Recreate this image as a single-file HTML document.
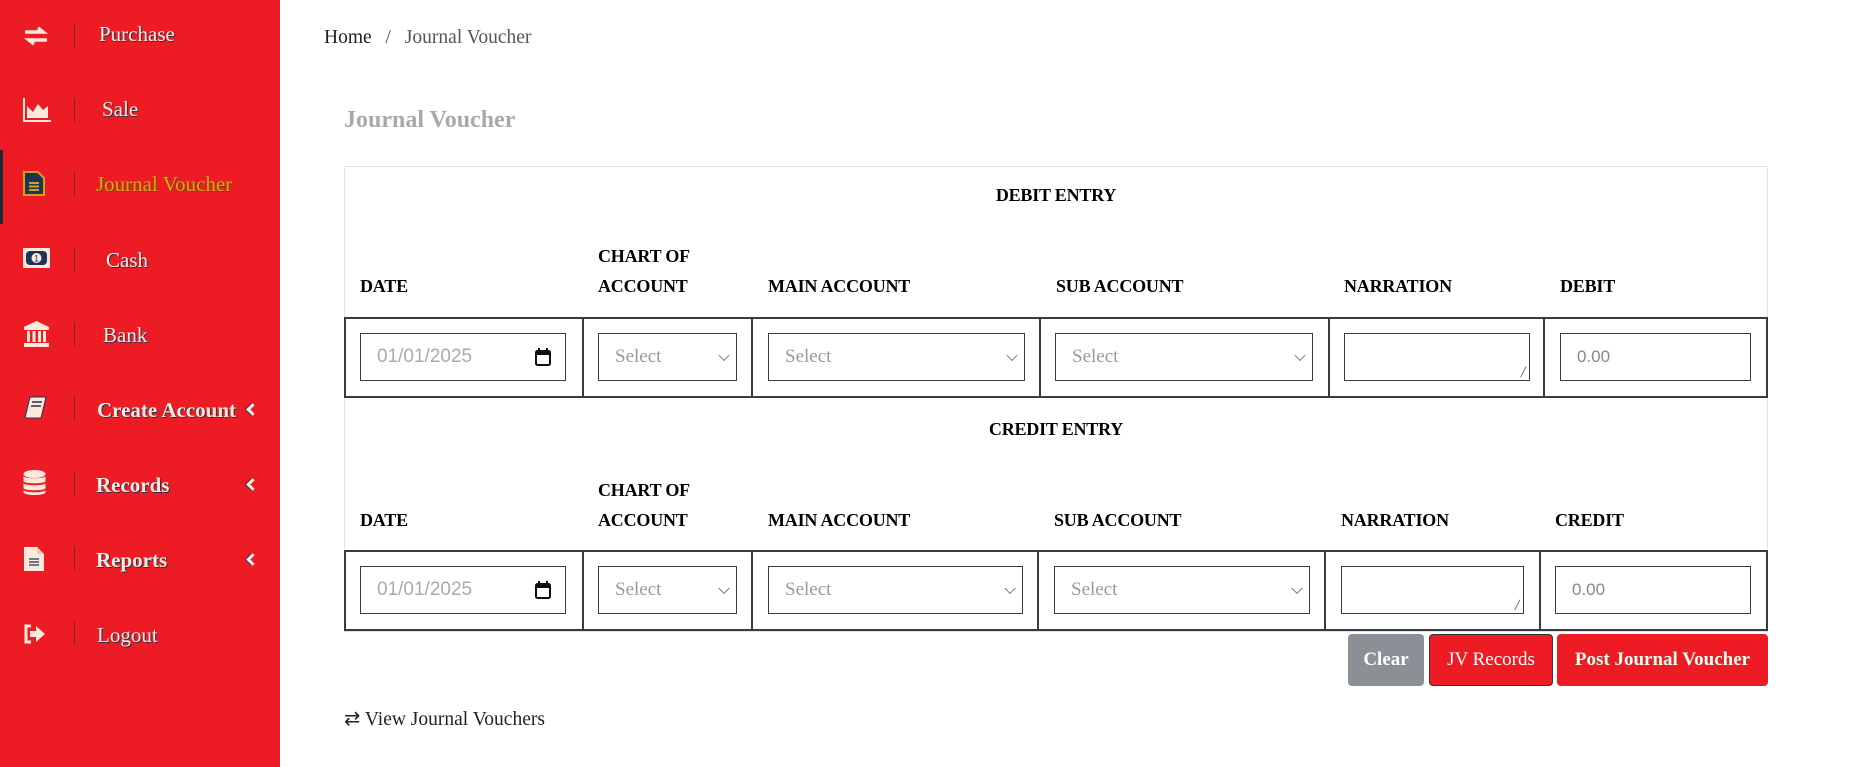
<!DOCTYPE html>
<html><head><meta charset="utf-8">
<style>
*{margin:0;padding:0;box-sizing:border-box}
body{width:1876px;height:767px;position:relative;overflow:hidden;background:#fff;font-family:"Liberation Serif",serif;color:#222}
.a{position:absolute;white-space:nowrap}
#sb{position:absolute;left:0;top:0;width:280px;height:767px;background:#ed1c24}
.mi{color:#fbeadc;font-size:21px;line-height:24px;text-shadow:1px 1px 0 #1d3557}
.mb{font-weight:bold}
.dv{position:absolute;left:74px;width:1px;height:24px;background:#6b2a30}
.ic{position:absolute;left:23px}
.chev{position:absolute;left:248px;width:9px;height:9px;border-left:3px solid #fbeadc;border-bottom:3px solid #fbeadc;transform:rotate(45deg);box-shadow:-1px 1px 0 #1d3557}
.h{font-weight:bold;font-size:18px;color:#000;line-height:30px;letter-spacing:-0.2px}
.box{position:absolute;border:2px solid #3a3b40;background:#fff}
.inp{position:absolute;border:1.5px solid #3a3b40;background:#fff;color:#999;font-size:19px;display:flex;align-items:center;padding-left:16px}
.sans{font-family:"Liberation Sans",sans-serif}
.car{position:absolute;right:8px;top:50%;width:8px;height:8px;border-right:1.5px solid #777;border-bottom:1.5px solid #777;transform:translateY(-70%) rotate(45deg)}
.btn{position:absolute;border-radius:4px;color:#fff;font-weight:bold;font-size:19px;display:flex;align-items:center;justify-content:center}
</style></head><body>
<div id="sb">
 <div class="a" style="left:0;top:150px;width:3px;height:74px;background:#1f2a33"></div>
 <svg class="ic" style="top:26px" width="26" height="20" viewBox="0 0 26 20"><path d="M2 6h18l-5-4M24 14H6l5 4" stroke="#fbeadc" stroke-width="3.5" fill="none"/></svg>
 <div class="dv" style="top:23px"></div><div class="a mi" style="left:99px;top:22px">Purchase</div>
 <svg class="ic" style="top:98px" width="28" height="24" viewBox="0 0 28 24"><path d="M1 0v23h27" stroke="#fbeadc" stroke-width="2" fill="none"/><path d="M4 20V8l6 6 5-8 5 6 5-4v12z" fill="#fbeadc"/></svg>
 <div class="dv" style="top:98px"></div><div class="a mi" style="left:102px;top:97px">Sale</div>
 <svg class="ic" style="top:171px" width="22" height="25" viewBox="0 0 22 25"><path d="M1 1h14l6 6v17H1z" fill="#1d3557" stroke="#d4a017" stroke-width="2"/><path d="M6 12h10M6 15.5h10M6 19h10" stroke="#d4a017" stroke-width="2"/></svg>
 <div class="dv" style="top:172px"></div><div class="a mi" style="left:96px;top:172px;color:#d9a515;text-shadow:1px 1px 0 #6b4a10">Journal Voucher</div>
 <svg class="ic" style="top:248px" width="27" height="20" viewBox="0 0 27 20"><rect x="0" y="0" width="27" height="20" fill="#fbeadc"/><rect x="3" y="3" width="21" height="14" rx="4" fill="#1d3557"/><circle cx="13.5" cy="10" r="5" fill="#fbeadc"/><text x="13.5" y="13.5" font-size="9" text-anchor="middle" fill="#1d3557" font-family="Liberation Sans">1</text></svg>
 <div class="dv" style="top:247px"></div><div class="a mi" style="left:106px;top:248px">Cash</div>
 <svg class="ic" style="top:320px" width="27" height="27" viewBox="0 0 27 27"><path d="M13.5 1L1 7v3h25V7z" fill="#fbeadc"/><path d="M4 11h3v11H4zM9.5 11h3v11h-3zM15 11h3v11h-3zM20 11h3v11h-3z" fill="#fbeadc"/><rect x="1" y="23" width="25" height="4" fill="#fbeadc"/></svg>
 <div class="dv" style="top:322px"></div><div class="a mi" style="left:103px;top:323px">Bank</div>
 <svg class="ic" style="top:396px" width="24" height="24" viewBox="0 0 24 24"><path d="M7 1h16l-5 21H2z" fill="#fbeadc" stroke="#1d3557" stroke-width="1"/><path d="M9 6h10M8 10h10" stroke="#1d3557" stroke-width="1.5"/></svg>
 <div class="dv" style="top:396px"></div><div class="a mi mb" style="left:97px;top:398px">Create Account</div>
 <div class="chev" style="top:405px"></div>
 <svg class="ic" style="top:470px" width="23" height="26" viewBox="0 0 23 26"><ellipse cx="11.5" cy="4" rx="11" ry="4" fill="#fbeadc"/><path d="M0.5 6v5c0 3 22 3 22 0V6c0 3-22 3-22 0zM0.5 13v5c0 3 22 3 22 0v-5c0 3-22 3-22 0zM0.5 20v2c0 4 22 4 22 0v-2c0 3-22 3-22 0z" fill="#fbeadc"/></svg>
 <div class="dv" style="top:471px"></div><div class="a mi mb" style="left:96px;top:473px">Records</div>
 <div class="chev" style="top:480px"></div>
 <svg class="ic" style="top:546px" width="22" height="26" viewBox="0 0 22 26"><path d="M1 1h13l7 7v17H1z" fill="#fbeadc"/><path d="M14 1v7h7" fill="#e8c9b8"/><path d="M6 13h10M6 16h10M6 19h10" stroke="#1d3557" stroke-width="1.3"/></svg>
 <div class="dv" style="top:546px"></div><div class="a mi mb" style="left:96px;top:548px">Reports</div>
 <div class="chev" style="top:555px"></div>
 <svg class="ic" style="top:624px" width="23" height="20" viewBox="0 0 23 20"><path d="M8 2H3v16h5" stroke="#fbeadc" stroke-width="3" fill="none"/><path d="M7 7h6V2l9 8-9 8v-5H7z" fill="#fbeadc"/></svg>
 <div class="dv" style="top:621px"></div><div class="a mi" style="left:97px;top:623px">Logout</div>
</div>

<div class="a" style="left:324px;top:27px;font-size:19.5px;color:#222">Home <span style="color:#555;margin:0 9px">/</span> <span style="color:#555">Journal Voucher</span></div>
<div class="a" style="left:344px;top:107px;font-size:24px;font-weight:bold;color:#a9a9a9">Journal Voucher</div>

<div class="a" style="left:344px;top:166px;width:1424px;height:466px;border:1px solid #e0e0e6"></div>

<div class="a h" style="left:344px;width:1424px;text-align:center;top:180px">DEBIT ENTRY</div>
<div class="a h" style="left:598px;top:241px">CHART OF</div>
<div class="a h" style="left:360px;top:271px">DATE</div>
<div class="a h" style="left:598px;top:271px">ACCOUNT</div>
<div class="a h" style="left:768px;top:271px">MAIN ACCOUNT</div>
<div class="a h" style="left:1056px;top:271px">SUB ACCOUNT</div>
<div class="a h" style="left:1344px;top:271px">NARRATION</div>
<div class="a h" style="left:1560px;top:271px">DEBIT</div>

<div class="box" style="left:344px;top:317px;width:1424px;height:81px"></div>
<div class="a" style="left:582px;top:317px;width:2px;height:81px;background:#3a3b40"></div>
<div class="a" style="left:751px;top:317px;width:2px;height:81px;background:#3a3b40"></div>
<div class="a" style="left:1039px;top:317px;width:2px;height:81px;background:#3a3b40"></div>
<div class="a" style="left:1328px;top:317px;width:2px;height:81px;background:#3a3b40"></div>
<div class="a" style="left:1543px;top:317px;width:2px;height:81px;background:#3a3b40"></div>

<div class="inp sans" style="left:360px;top:333px;width:206px;height:48px;font-size:19px;color:#aaa">01/01/2025
 <svg style="position:absolute;right:14px;top:14px" width="16" height="18" viewBox="0 0 16 18"><rect x="1" y="3" width="14" height="14" rx="1.5" fill="none" stroke="#111" stroke-width="2"/><rect x="1" y="3" width="14" height="4" fill="#111"/><path d="M4 0v4M12 0v4" stroke="#111" stroke-width="2"/></svg></div>
<div class="inp" style="left:598px;top:333px;width:139px;height:48px">Select<span class="car"></span></div>
<div class="inp" style="left:768px;top:333px;width:257px;height:48px">Select<span class="car"></span></div>
<div class="inp" style="left:1055px;top:333px;width:258px;height:48px">Select<span class="car"></span></div>
<div class="inp" style="left:1344px;top:333px;width:186px;height:48px"><span style="position:absolute;right:3px;bottom:2px;font-size:9px;color:#444">&#x2571;</span></div>
<div class="inp sans" style="left:1560px;top:333px;width:191px;height:48px;font-size:17px;color:#888">0.00</div>

<div class="a h" style="left:344px;width:1424px;text-align:center;top:414px">CREDIT ENTRY</div>
<div class="a h" style="left:598px;top:475px">CHART OF</div>
<div class="a h" style="left:360px;top:505px">DATE</div>
<div class="a h" style="left:598px;top:505px">ACCOUNT</div>
<div class="a h" style="left:768px;top:505px">MAIN ACCOUNT</div>
<div class="a h" style="left:1054px;top:505px">SUB ACCOUNT</div>
<div class="a h" style="left:1341px;top:505px">NARRATION</div>
<div class="a h" style="left:1555px;top:505px">CREDIT</div>

<div class="box" style="left:344px;top:550px;width:1424px;height:81px"></div>
<div class="a" style="left:582px;top:550px;width:2px;height:81px;background:#3a3b40"></div>
<div class="a" style="left:751px;top:550px;width:2px;height:81px;background:#3a3b40"></div>
<div class="a" style="left:1037px;top:550px;width:2px;height:81px;background:#3a3b40"></div>
<div class="a" style="left:1324px;top:550px;width:2px;height:81px;background:#3a3b40"></div>
<div class="a" style="left:1539px;top:550px;width:2px;height:81px;background:#3a3b40"></div>

<div class="inp sans" style="left:360px;top:566px;width:206px;height:48px;font-size:19px;color:#aaa">01/01/2025
 <svg style="position:absolute;right:14px;top:14px" width="16" height="18" viewBox="0 0 16 18"><rect x="1" y="3" width="14" height="14" rx="1.5" fill="none" stroke="#111" stroke-width="2"/><rect x="1" y="3" width="14" height="4" fill="#111"/><path d="M4 0v4M12 0v4" stroke="#111" stroke-width="2"/></svg></div>
<div class="inp" style="left:598px;top:566px;width:139px;height:48px">Select<span class="car"></span></div>
<div class="inp" style="left:768px;top:566px;width:255px;height:48px">Select<span class="car"></span></div>
<div class="inp" style="left:1054px;top:566px;width:256px;height:48px">Select<span class="car"></span></div>
<div class="inp" style="left:1341px;top:566px;width:183px;height:48px"><span style="position:absolute;right:3px;bottom:2px;font-size:9px;color:#444">&#x2571;</span></div>
<div class="inp sans" style="left:1555px;top:566px;width:196px;height:48px;font-size:17px;color:#888">0.00</div>

<div class="btn" style="left:1348px;top:634px;width:76px;height:52px;background:#8a9096">Clear</div>
<div class="btn" style="left:1429px;top:634px;width:124px;height:52px;background:#ed1c24;border:1px solid #333;font-weight:normal">JV Records</div>
<div class="btn" style="left:1557px;top:634px;width:211px;height:52px;background:#ed1c24;color:#eafff0">Post Journal Voucher</div>

<div class="a" style="left:344px;top:707px;font-size:19.5px;color:#222">&#x21C4; View Journal Vouchers</div>
</body></html>
